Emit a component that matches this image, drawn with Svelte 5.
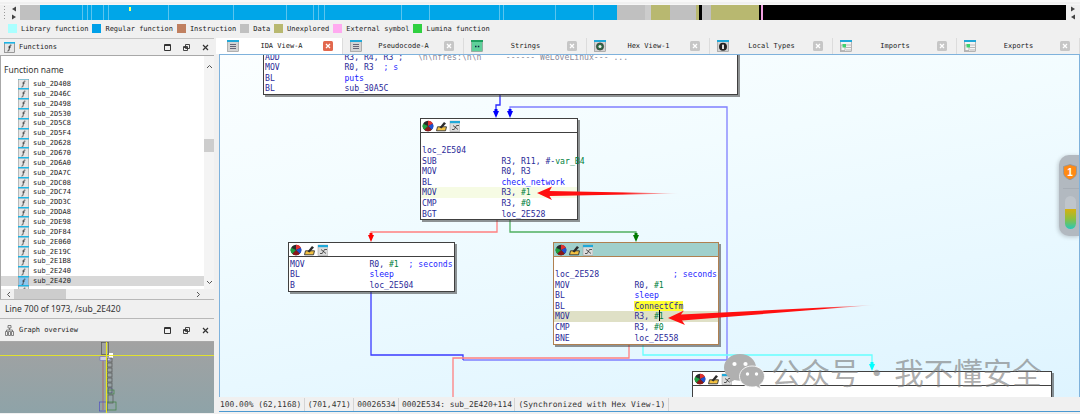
<script lang="ts">
const legend = [
  ["#aaffff", "Library function"],
  ["#00a0e8", "Regular function"],
  ["#c08060", "Instruction"],
  ["#c0c0c0", "Data"],
  ["#b8b870", "Unexplored"],
  ["#ffaaf0", "External symbol"],
  ["#30d040", "Lumina function"],
];

// nav strip runs from x=20 to x=1066
const navBlocks = [
  ["#c0c0c0", 20],
  ["#00a6e8", 577],
  ["#c0c0c0", 28],
  ["#cccccc", 6],
  ["#b8b870", 19],
  ["#c0c0c0", 26],
  ["#b8b870", 3],
  ["#000000", 3],
  ["#c0c0c0", 9],
  ["#b8b870", 48],
  ["#000000", 2],
  ["#f0a0e0", 2],
  ["#000000", 303],
];
const navTicks = [82, 87, 91, 103, 108, 168, 233, 286, 313, 318, 324, 401, 429, 499, 503, 555, 593];

const tabs = [
  { name: "IDA View-A", kind: "ida", w: 127, active: true },
  { name: "Pseudocode-A", kind: "ida", w: 121 },
  { name: "Strings", kind: "str", w: 123 },
  { name: "Hex View-1", kind: "hex", w: 123 },
  { name: "Local Types", kind: "loc", w: 123 },
  { name: "Imports", kind: "imp", w: 124 },
  { name: "Exports", kind: "imp", w: 123 },
];

const functions = [
  "sub_2D408", "sub_2D46C", "sub_2D498", "sub_2D530", "sub_2D5C8", "sub_2D5F4", "sub_2D628",
  "sub_2D670", "sub_2D6A0", "sub_2DA7C", "sub_2DC08", "sub_2DC74", "sub_2DD3C", "sub_2DDA8",
  "sub_2DE98", "sub_2DF84", "sub_2E060", "sub_2E19C", "sub_2E1B8", "sub_2E240", "sub_2E420",
  "",
];

const R = "r", N = "n", L = "l", C = "c", G = "g";
const nodes = [
  {
    x: 263, y: 49, w: 475, h: 46, noHeader: true,
    rows: [
      { m: "ADD", o: [["R3, R4, R3 ;   ", R], ["\\n\\nfres:\\n\\n     ------ WeLoveLinux--- ...", G]] },
      { m: "MOV", o: [["R0, R3  ", R], ["; s", C]] },
      { m: "BL", o: [["puts", L]] },
      { m: "BL", o: [["sub_30A5C", R]] },
    ],
  },
  {
    x: 420, y: 118, w: 158, h: 102,
    rows: [
      { blank: true },
      { label: "loc_2E504" },
      { m: "SUB", o: [["R3, R11, #-", R], ["var_B4", N]] },
      { m: "MOV", o: [["R0, R3", R]] },
      { m: "BL", o: [["check_network", L]] },
      { m: "MOV", hl: "soft", o: [["R3, ", R], ["#1", N]] },
      { m: "CMP", o: [["R3, ", R], ["#0", N]] },
      { m: "BGT", o: [["loc_2E528", R]] },
    ],
  },
  {
    x: 288, y: 242, w: 167, h: 50,
    rows: [
      { m: "MOV", o: [["R0, ", R], ["#1", N], ["  ", R], ["; seconds", C]] },
      { m: "BL", o: [["sleep", L]] },
      { m: "B", o: [["loc_2E504", R]] },
    ],
  },
  {
    x: 553, y: 242, w: 166, h: 103, selected: true,
    rows: [
      { blank: true },
      { label: "loc_2E528", note: "; seconds" },
      { m: "MOV", o: [["R0, ", R], ["#1", N]] },
      { m: "BL", o: [["sleep", L]] },
      { m: "BL", o: [["ConnectCfm", "y"]] },
      { m: "MOV", hl: "strong", caret: true, o: [["R3, ", R], ["#1", N]] },
      { m: "CMP", o: [["R3, ", R], ["#0", N]] },
      { m: "BNE", o: [["loc_2E558", R]] },
    ],
  },
  { x: 692, y: 371, w: 360, h: 60, rows: [] },
];

const edges = [
  ["#7f7fff", "463,360 727,360 727,107 510,107 510,112"],
  ["#3a3aff", "371,292 371,355 463,355 463,360"],
  ["#2a2aff", "500,95 500,105 496,105 496,112"],
  ["#ff8080", "497,220 497,232 371,232 371,236"],
  ["#50b060", "510,220 510,232 636,232 636,236"],
  ["#ff8080", "629,345 629,358 453,358 453,397"],
  ["#66ffff", "643,345 643,355 872,355 872,365"],
];
const heads = [
  ["#0000ff", 496, 118], ["#0000ff", 510, 118], ["#ff0000", 371, 242],
  ["#007a00", 636, 242], ["#00ffff", 872, 371],
];

const overviewChain = [56, 61, 66, 71, 76, 81];
</script>

{#snippet windowBtns()}
  <div class="win-btns">
    <svg width="7" height="7" viewBox="0 0 7 7"><path d="M.5.5h6v6h-6z M.5 1.5h6" fill="none" stroke="#333"/></svg>
    <svg width="7" height="7" viewBox="0 0 7 7"><path d="M2.5.5h4v4h-4z M.5 2.5h4v4h-4z M.5 3.5h4" fill="#f0f0f0" stroke="#333" stroke-width=".9"/></svg>
    <svg width="7" height="7" viewBox="0 0 7 7"><path d="M1 1l5 5M6 1l-5 5" stroke="#333" stroke-width="1.2"/></svg>
  </div>
{/snippet}

{#snippet funcIcon(selected)}
  <svg class="fn-icon" width="11" height="11" viewBox="0 0 11 11">
    <rect x=".5" y="1" width="10" height="9.5" fill={selected ? "#8cc6ee" : "#e6e6e6"} stroke="#a0a0a0" stroke-width=".7"/>
    <rect width="11" height="1.4" fill="#1cb4e4"/>
    <path d="M7.4 3.2c-1.2-.4-1.6.2-1.8 1.4L4.9 8.3c-.2.7-.7.9-1.4.7M4.3 5h2.6" fill="none" stroke="#333" stroke-width=".8"/>
  </svg>
{/snippet}

{#snippet tabIcon(kind)}
  <svg width="12" height="12" viewBox="0 0 12 12">
    <rect x=".5" y=".5" width="11" height="11" fill={kind === "str" ? "#5fd09a" : kind === "imp" ? "#f4f4f4" : "#d4d4d4"} stroke="#8a8a8a" stroke-width=".6"/>
    <rect width="12" height="2" fill={kind === "str" ? "#1fa060" : "#20a8d8"}/>
    {#if kind === "ida"}
      <path d="M3 4.5h6M3 6.5h6M3 8.5h6" stroke="#667" stroke-width="1"/>
    {:else if kind === "str"}
      <path d="M4 6.5h1.5M6.8 6.5h1.5" stroke="#124" stroke-width="1.6"/>
    {:else if kind === "hex"}
      <circle cx="6" cy="6.5" r="3.6" fill="#2f6b45" stroke="#333" stroke-width=".7"/>
      <circle cx="6" cy="6.5" r="1.5" fill="#eee"/>
    {:else if kind === "loc"}
      <circle cx="6" cy="6.8" r="4" fill="#222"/>
      <rect x="5" y="4.6" width="2" height="4.4" fill="#ddd"/>
    {:else}
      <path d="M6 5h5M6 7.5h5M6 10h5M1 5h4v5.5H1z" fill="none" stroke="#aaa" stroke-width=".8"/>
      <rect x="2.5" y="4" width="3.5" height="3.5" fill="#40d070"/>
    {/if}
  </svg>
{/snippet}

{#snippet nodeIcons()}
  <svg width="38" height="12" viewBox="0 0 38 12">
    <circle cx="6" cy="6" r="5.300" fill="#2a2a2a"/>
    <path d="M6 6V.7a5.300 5.300 0 0 1 4.900 3.100z" fill="#e03030"/>
    <path d="M6 6l4.900-2.200A5.300 5.300 0 0 1 9.700 9.800z" fill="#2050d0"/>
    <path d="M6 6L9.700 9.800A5.300 5.300 0 0 1 2.300 9.800z" fill="#8a1818"/>
    <path d="M6 6L2.300 9.800A5.300 5.300 0 0 1 1.100 3.800z" fill="#20a040"/>
    <path d="M14.500 10.800l1-4h9l-1 4z" fill="#f2c040" stroke="#333" stroke-width=".9"/>
    <path d="M17.500 7.500l4.500-5.500 2 1.500-4.500 5z" fill="#2c2c2c"/>
    <rect x="28" y="1" width="10" height="10.500" fill="#dcdcdc" stroke="#999" stroke-width=".5"/>
    <rect x="28" y="1" width="10" height="2.200" fill="#20a8d8"/>
    <path d="M30 9.500h2.200l2.300-4H37M31 5.500l5 4" fill="none" stroke="#333" stroke-width=".8"/>
  </svg>
{/snippet}

<div class="page">
  <div class="strip"></div>

  <div class="nav">
    <svg class="grip" width="4" height="15" viewBox="0 0 4 15"><path d="M1.5 1v13" stroke="#999" stroke-dasharray="1 2"/></svg>
    <div class="nav-arrows">
      <svg width="6" height="6" viewBox="0 0 6 6"><path d="M5 .5v5L1 3z" fill="#444"/></svg>
      <svg width="6" height="6" viewBox="0 0 6 6"><path d="M1 .5v5L5 3z" fill="#444"/></svg>
    </div>
    <div class="nav-track">
      {#each navBlocks as [color, w]}
        <span style="background:{color};width:{w}px"></span>
      {/each}
      {#each navTicks as t}
        <i class="tick" style="left:{t - 20}px"></i>
      {/each}
      <i class="pin"></i>
    </div>
    <div class="nav-arrows right">
      <svg width="6" height="6" viewBox="0 0 6 6"><path d="M1 .5v5L5 3z" fill="#444"/></svg>
      <svg width="6" height="6" viewBox="0 0 6 6"><path d="M5 .5v5L1 3z" fill="#444"/></svg>
    </div>
  </div>

  <div class="legend">
    {#each legend as [color, label]}
      <div class="legend-item">
        <span class="swatch" style="background:{color}"></span>
        <span>{label}</span>
      </div>
    {/each}
  </div>

  <div class="body">
    <aside class="side">
      <div class="panel-head">
        <svg width="11" height="11" viewBox="0 0 11 11">
          <rect x=".5" y=".5" width="10" height="10" fill="#e6e6e6" stroke="#777" stroke-width=".7"/>
          <rect width="11" height="1.6" fill="#1cb4e4"/>
          <path d="M7.4 3.2c-1.2-.4-1.6.2-1.8 1.4L4.9 8.3c-.2.7-.7.9-1.4.7M4.3 5h2.6" fill="none" stroke="#222" stroke-width=".9"/>
        </svg>
        <span class="head-title">Functions</span>
        {@render windowBtns()}
      </div>

      <div class="fn-area">
        <div class="fn-main">
          <div class="fn-header">Function name</div>
          <div class="fn-list">
            {#each functions as fn}
              <div class="fn-row" class:selected={fn === "sub_2E420"}>
                {@render funcIcon(fn === "sub_2E420")}
                <span>{fn}</span>
              </div>
            {/each}
          </div>
        </div>
        <div class="vscroll">
          <svg width="7" height="5" viewBox="0 0 7 5"><path d="M1 4l2.5-2.5L6 4" fill="none" stroke="#555"/></svg>
          <div class="vthumb"></div>
          <svg width="7" height="5" viewBox="0 0 7 5"><path d="M1 1l2.5 2.5L6 1" fill="none" stroke="#555"/></svg>
        </div>
      </div>

      <div class="hscroll">
        <svg width="5" height="7" viewBox="0 0 5 7"><path d="M4 1L1.5 3.5 4 6" fill="none" stroke="#555"/></svg>
        <div class="hthumb"></div>
        <svg width="5" height="7" viewBox="0 0 5 7"><path d="M1 1l2.5 2.5L1 6" fill="none" stroke="#555"/></svg>
      </div>

      <div class="side-status">Line 700 of 1973, /sub_2E420</div>

      <div class="panel-head graph-head">
        <svg width="9" height="11" viewBox="0 0 9 11"><path d="M3 .5h3v2.5H3zM4.5 3v2M1.5 5h6M1.5 5v1.5M7.5 5v1.5M.5 6.5h2v4h-2zM3.5 6.5h2v4h-2zM6.5 6.5h2v4h-2z" fill="none" stroke="#666" stroke-width=".8"/></svg>
        <span class="head-title">Graph overview</span>
        {@render windowBtns()}
      </div>

      <div class="overview">
        <svg width="214" height="71" viewBox="0 0 214 71">
          <defs>
            <linearGradient id="ovbg" x1="0" y1="0" x2="0" y2="1">
              <stop offset="0" stop-color="#a2a2a2"/>
              <stop offset="1" stop-color="#8ea3a8"/>
            </linearGradient>
          </defs>
          <rect width="214" height="71" fill="url(#ovbg)"/>
          <rect x="101.500" y="0.500" width="7" height="12" fill="none" stroke="#555" stroke-width=".7"/>
          <path d="M103 14v54" stroke="#b06060" stroke-width=".8"/>
          <path d="M100 14.500h10v4h-10z" fill="#d0d0e0" stroke="#6060c0" stroke-width=".5"/>
          <rect x="109" y="11" width="4" height="5" fill="#fff"/>
          {#each overviewChain as y}
            <rect x="107.500" y={y - 40} width="4.500" height="4" fill="none" stroke="#555" stroke-width=".7"/>
          {/each}
          <rect x="108" y="46" width="4" height="5" fill="none" stroke="#446" stroke-width=".7"/>
          <rect x="108" y="48" width="6" height="4" fill="none" stroke="#408040" stroke-width=".7"/>
          <rect x="108" y="53" width="5" height="8" fill="none" stroke="#555" stroke-width=".7"/>
          <rect x="99.500" y="60" width="8" height="9" fill="none" stroke="#5050c0" stroke-width=".7"/>
          <rect x="107" y="60" width="9" height="8" fill="none" stroke="#408040" stroke-width=".7"/>
          <path d="M0 13.500h214" stroke="#e8e820" stroke-width=".9"/>
          <path d="M106.500 0v71" stroke="#e8e820" stroke-width="1.200"/>
        </svg>
      </div>
    </aside>

    <main class="main">
      <div class="tabs">
        {#each tabs as tab}
          <div class="tab" class:active={tab.active} style="width:{tab.w}px">
            {@render tabIcon(tab.kind)}
            <span class="tab-name">{tab.name}</span>
            <svg class="close" width="10" height="10" viewBox="0 0 10 10">
              <rect width="10" height="10" rx="1.500" fill={tab.active ? "#e2684e" : "#c6c6c6"}/>
              <path d="M3 3l4 4M7 3l-4 4" stroke="#fff" stroke-width="1.300"/>
            </svg>
          </div>
        {/each}
      </div>

      <div class="canvas">
        <svg class="layer" width="861" height="344" viewBox="219 54 861 344">
          {#each edges as [color, points]}
            <polyline {points} fill="none" stroke={color} stroke-width="1.300"/>
          {/each}
          {#each heads as [color, x, y]}
            <path d="M{x - 1.500} {y - 9}h3v2h1.500L{x} {y}l-3-7h1.500z" fill={color}/>
          {/each}
        </svg>

        {#each nodes as node}
          <div class="node" class:selected={node.selected}
            style="left:{node.x - 219}px;top:{node.y - 54}px;width:{node.w}px;height:{node.h}px">
            {#if !node.noHeader}
              <div class="node-head">{@render nodeIcons()}</div>
            {/if}
            <div class="node-body">
              {#each node.rows as row}
                <div class="asm {row.hl ?? ''}">
                  {#if row.blank}
                    &nbsp;
                  {:else if row.label}
                    <span class="t-r">{row.label}</span>
                    {#if row.note}<span class="note t-c">{row.note}</span>{/if}
                  {:else}
                    <span class="mn t-r">{row.m}</span>
                    <span class="ops">{#each row.o as [text, cls], i}{#if row.caret && i === 1}<i class="caret"></i>{/if}<span class="t-{cls}">{text}</span>{/each}</span>
                  {/if}
                </div>
              {/each}
            </div>
          </div>
        {/each}

        <svg class="layer arrows" width="861" height="344" viewBox="219 54 861 344">
          <defs>
            <linearGradient id="fadeA" gradientUnits="userSpaceOnUse" x1="537" y1="193" x2="680" y2="193">
              <stop offset="0" stop-color="#ff1010"/>
              <stop offset=".6" stop-color="#ff1010"/>
              <stop offset="1" stop-color="#ff1010" stop-opacity="0"/>
            </linearGradient>
            <linearGradient id="fadeB" gradientUnits="userSpaceOnUse" x1="668" y1="318" x2="875" y2="305">
              <stop offset="0" stop-color="#ff1010"/>
              <stop offset=".75" stop-color="#ff1010"/>
              <stop offset="1" stop-color="#ff1010" stop-opacity="0"/>
            </linearGradient>
          </defs>
          <polygon points="537,193 552,186.500 549.500,191 680,193.500 549.500,196 552,200" fill="url(#fadeA)"/>
          <polygon points="668,318 684,310.500 681,314.500 875,305 682,320.500 685,325" fill="url(#fadeB)"/>
        </svg>

        <div class="watermark">
          <svg width="42" height="36" viewBox="0 0 42 36">
            <path d="M17 1C8 1 1 7 1 14.500c0 4.300 2.400 8 6 10.500l-1 5 5.500-3c1.800.5 3.600.7 5.500.7C26 27.700 33 21.700 33 14.500S26 1 17 1z" fill="#b0b0b0"/>
            <circle cx="11.500" cy="11" r="2.100" fill="#fff"/>
            <circle cx="22.500" cy="11" r="2.100" fill="#fff"/>
            <path d="M29 13c-7 0-12.500 4.600-12.500 10.500S22 34 29 34c1.500 0 2.900-.2 4.200-.6L37.500 36l-.8-4.200c3-2 4.800-5 4.800-8.300C41.500 17.600 36 13 29 13z" fill="#b0b0b0" stroke="#fff" stroke-width=".8"/>
            <circle cx="24.500" cy="21" r="1.700" fill="#fff"/>
            <circle cx="33.500" cy="21" r="1.700" fill="#fff"/>
          </svg>
          <span>公众号 · 我不懂安全</span>
        </div>

        <div class="widget">
          <svg width="14" height="16" viewBox="0 0 14 16">
            <path d="M7 .5l6.500 2v6c0 3.500-3 6-6.500 7.200C3.500 14.500.5 12 .5 8.500v-6z" fill="#ff8a14" stroke="#8a97a5" stroke-width=".8"/>
            <text x="7" y="11.500" text-anchor="middle" class="shield-num">1</text>
          </svg>
          <div class="widget-line"></div>
          <div class="gauge"><div class="gauge-fill"></div></div>
        </div>
      </div>

      <div class="status">
        <span class="cell first">100.00% (62,1168)</span>
        <span class="cell">(701,471)</span>
        <span class="cell">00026534</span>
        <span class="cell">0002E534: sub_2E420+114</span>
        <span class="cell last">(Synchronized with Hex View-1)</span>
      </div>
    </main>
  </div>
</div>

<style>
  :global(body) {
    margin: 0;
    background: #f0f0f0;
  }
  .page {
    width: 1080px;
    height: 414px;
    overflow: hidden;
    display: flex;
    flex-direction: column;
    background: #f0f0f0;
    color: #222;
    font-family: "DejaVu Sans Mono", "Liberation Mono", monospace;
    font-size: 7px;
  }
  .strip {
    height: 5px;
    flex: none;
    box-sizing: border-box;
    border-top: 2px solid #f8f8f8;
    border-bottom: 1px solid #f6f6f6;
  }

  .nav {
    height: 15px;
    flex: none;
    display: flex;
    align-items: center;
    padding-left: 3px;
  }
  .grip { flex: none; width: 4px; }
  .nav-arrows {
    width: 13px;
    display: flex;
    flex-direction: column;
    align-items: center;
    gap: 2px;
  }
  .nav-arrows.right { width: 14px; }
  .nav-track {
    position: relative;
    display: flex;
    height: 15px;
  }
  .nav-track span { display: block; height: 100%; flex: none; }
  .tick {
    position: absolute;
    top: 0;
    bottom: 0;
    width: 1px;
    background: #5cc4ee;
  }
  .pin {
    position: absolute;
    left: 109px;
    top: 2px;
    width: 2px;
    height: 4px;
    background: #ffff60;
  }

  .legend {
    height: 18px;
    flex: none;
    display: flex;
    align-items: center;
    gap: 4px;
    padding-left: 8px;
    box-sizing: border-box;
    padding-bottom: 1px;
  }
  .legend-item {
    display: flex;
    align-items: center;
    gap: 4px;
    white-space: nowrap;
  }
  .swatch { width: 9px; height: 9px; flex: none; }

  .body { flex: 1; min-height: 0; display: flex; }

  .side {
    width: 214px;
    flex: none;
    margin-right: 2px;
    display: flex;
    flex-direction: column;
    border-top: 1px solid #c4c4c4;
    box-sizing: border-box;
  }
  .panel-head {
    height: 16px;
    flex: none;
    display: flex;
    align-items: center;
    padding: 0 5px 0 4px;
    gap: 4px;
    border-bottom: 1px solid #a8a8a8;
    font-size: 7px;
  }
  .head-title { flex: 1; }
  .win-btns { display: flex; gap: 12px; align-items: center; }

  .fn-area {
    height: 233px;
    flex: none;
    display: flex;
    border-left: 1px solid #a8a8a8;
    background: #fff;
  }
  .fn-main { flex: 1; min-width: 0; display: flex; flex-direction: column; }
  .fn-header {
    height: 23px;
    flex: none;
    box-sizing: border-box;
    padding: 7px 0 0 3px;
    font-family: "Noto Sans", "Open Sans", sans-serif;
    font-size: 8.500px;
    line-height: 14px;
    color: #333;
  }
  .fn-list { flex: 1; min-height: 0; overflow: hidden; }
  .fn-row {
    height: 9.870px;
    display: flex;
    align-items: center;
    gap: 4px;
    padding-left: 17px;
    white-space: nowrap;
  }
  .fn-row.selected { background: #d8d8d8; }
  .fn-icon { flex: none; }
  .vscroll {
    width: 10px;
    flex: none;
    background: #f4f4f4;
    display: flex;
    flex-direction: column;
    align-items: center;
    padding: 8px 0 4px;
    box-sizing: border-box;
    position: relative;
    justify-content: space-between;
  }
  .vthumb {
    position: absolute;
    top: 83px;
    left: 0;
    width: 100%;
    height: 13px;
    background: #cdcdcd;
  }
  .hscroll {
    height: 10px;
    flex: none;
    display: flex;
    align-items: center;
    justify-content: space-between;
    padding: 0 13px 0 5px;
    background: #f0f0f0;
    position: relative;
    border-left: 1px solid #a8a8a8;
  }
  .hthumb {
    position: absolute;
    left: 13px;
    top: 0;
    width: 52px;
    height: 100%;
    background: #cdcdcd;
  }
  .side-status {
    height: 20px;
    flex: none;
    box-sizing: border-box;
    padding-left: 5px;
    border-top: 1px solid #b8b8b8;
    border-bottom: 1px solid #b8b8b8;
    font-family: "Noto Sans", "Open Sans", sans-serif;
    font-size: 8.500px;
    line-height: 18px;
    color: #333;
  }
  .graph-head { height: 22px; padding-left: 5px; gap: 5px; }
  .overview { height: 71px; flex: none; }
  .overview svg { display: block; }

  .main { flex: 1; min-width: 0; display: flex; flex-direction: column; }
  .tabs { height: 16px; flex: none; display: flex; }
  .tab {
    flex: none;
    box-sizing: border-box;
    display: flex;
    align-items: center;
    padding: 0 9px 0 7px;
    border-right: 1px solid #dcdcdc;
  }
  .tab.active { background: #fff; padding-left: 11px; }
  .tab-name { flex: 1; text-align: center; white-space: nowrap; padding-left: 1px; }
  .close { flex: none; }

  .canvas {
    position: relative;
    height: 343px;
    flex: none;
    margin-left: 3px;
    overflow: hidden;
    border-top: 1px solid #7fb2dc;
    border-right: 1px solid #7fb2dc;
    border-left: 1px solid #7fb2dc;
    box-sizing: border-box;
    background: linear-gradient(170deg, #fbfeff 0%, #f2fcff 35%, #def4ff 100%);
    font-size: 8.150px;
    line-height: 10.600px;
  }
  .layer { position: absolute; left: -1px; top: -1px; }
  .arrows { z-index: 3; }

  .node {
    position: absolute;
    box-sizing: border-box;
    background: #fff;
    border: 1px solid #404040;
    box-shadow: 2px 2px 0 rgba(60, 60, 60, 0.55);
    z-index: 1;
    margin: -1px 0 0 -1px;
  }
  .node.selected {
    border-color: #b08050;
  }
  .node.selected .node-head { background: #a0d0cc; border-bottom-color: #b08050; }
  .node-head {
    height: 13px;
    border-bottom: 1px solid #404040;
    display: flex;
    align-items: center;
    padding-left: 1px;
  }
  .node-body { padding-top: 1.500px; }
  .asm {
    height: 10.600px;
    padding-left: 1px;
    white-space: pre;
    display: flex;
    position: relative;
  }
  .asm.soft { background: #f6fbe4; }
  .asm.strong { background: #dfe0c6; }
  .mn { width: 79.400px; flex: none; }
  .ops { white-space: pre; position: relative; }
  .note { position: absolute; right: 1px; }
  .t-r { color: #2a2a98; }
  .t-n { color: #008040; }
  .t-l { color: #1a1aff; }
  .t-c { color: #2a2aff; }
  .t-g { color: #8a8a9a; }
  .t-y { color: #2a2a98; background: #ffff30; }
  .caret {
    position: absolute;
    left: 24.500px;
    top: -1px;
    width: 1px;
    height: 11px;
    background: #000;
  }

  .watermark {
    position: absolute;
    left: 503px;
    top: 298px;
    z-index: 4;
    display: flex;
    align-items: center;
    gap: 6px;
    color: rgba(120, 120, 120, 0.62);
    font-family: "Noto Sans CJK SC", sans-serif;
    font-size: 29.500px;
    line-height: 36px;
    word-spacing: -4px;
    white-space: nowrap;
    pointer-events: none;
  }

  .widget {
    position: absolute;
    right: -1px;
    top: 100px;
    width: 21px;
    height: 81px;
    z-index: 5;
    box-sizing: border-box;
    border-radius: 10px 0 0 10px;
    background: #b2b9c0;
    box-shadow: -1px 1px 4px rgba(0, 0, 0, 0.2);
    padding: 9px 0 0 4px;
    display: flex;
    flex-direction: column;
    align-items: flex-start;
  }
  .shield-num {
    font-family: "Liberation Sans", sans-serif;
    font-size: 10px;
    font-weight: 700;
    fill: #fff;
  }
  .widget-line {
    width: 17px;
    height: 1px;
    background: #a6adb5;
    margin: 8px 0 7px;
  }
  .gauge {
    width: 11px;
    height: 33px;
    margin-left: 2px;
    border-radius: 6px;
    overflow: hidden;
    background: #bfc5cb;
    display: flex;
    align-items: flex-end;
  }
  .gauge-fill {
    width: 100%;
    height: 20px;
    background: linear-gradient(#d8b010 0%, #8cc040 50%, #28c8b8 100%);
  }

  .status {
    height: 14px;
    flex: none;
    margin-left: 3px;
    display: flex;
    align-items: center;
    font-size: 7.950px;
    white-space: nowrap;
    color: #333;
    box-sizing: border-box;
  }
  .cell {
    padding: 0 2.500px 0 3px;
    border-right: 1px solid #d4d4d4;
    line-height: 13px;
  }
  .cell.first { padding-left: 1px; }
  .cell.last { letter-spacing: 0.120px; }
  .main::after {
    content: "";
    display: block;
    height: 1px;
    background: #4a98d0;
    margin-left: 3px;
  }
</style>
